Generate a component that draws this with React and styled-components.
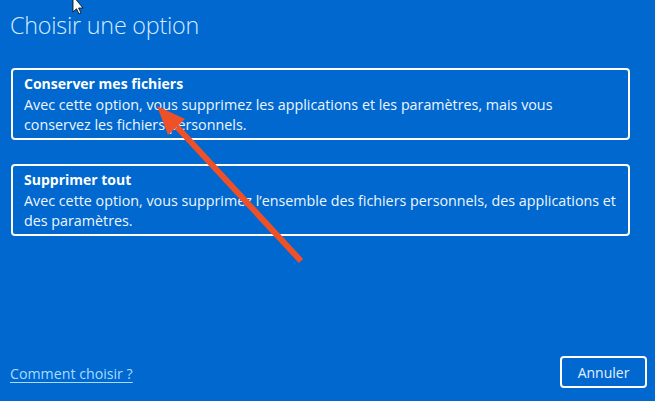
import React from "react";
import styled, { createGlobalStyle } from "styled-components";

const Global = createGlobalStyle`
  html, body {
    margin: 0;
    padding: 0;
    background: #0068cf;
  }
  * { box-sizing: border-box; }
`;

const Screen = styled.div`
  position: relative;
  width: 655px;
  height: 401px;
  overflow: hidden;
  background: #0068cf;
  font-family: "Open Sans", "Noto Sans", sans-serif;
  color: #ffffff;
  display: flex;
  flex-direction: column;
  padding: 0 8px 0 10px;
`;

const Title = styled.h1`
  margin: 0;
  padding-top: 8px;
  height: 68px;
  font-size: 23.3px;
  font-weight: 300;
  letter-spacing: -0.2px;
  color: #d6ecff;
  line-height: 34px;
`;

const Options = styled.div`
  display: flex;
  flex-direction: column;
  gap: 24px;
  width: 619px;
  margin-left: 1px;
`;

const Option = styled.div`
  border: 2px solid #ffffff;
  border-radius: 4px;
  padding: 3px 9px 3px 11px;
  height: 72px;
`;

const OptionName = styled.div`
  font-size: 14px;
  font-weight: 700;
  line-height: 22px;
  color: #ffffff;
`;

const OptionText = styled.div`
  font-size: 14.3px;
  line-height: 20px;
  color: #eef6ff;
`;

const Footer = styled.div`
  margin-top: auto;
  height: 45px;
  display: flex;
  align-items: flex-start;
  justify-content: space-between;
`;

const HelpLink = styled.a`
  margin-top: 8px;
  font-size: 14.2px;
  color: #a9dbff;
  text-decoration: underline;
  text-underline-offset: 3px;
`;

const CancelButton = styled.button`
  width: 87px;
  height: 32px;
  border: 2px solid #ffffff;
  border-radius: 4px;
  background: transparent;
  color: #e2f1ff;
  font-family: "Open Sans", "Noto Sans", sans-serif;
  font-size: 14px;
`;

const Overlay = styled.svg`
  position: absolute;
  left: 0;
  top: 0;
  pointer-events: none;
`;

const options = [
  {
    name: "Conserver mes fichiers",
    text: "Avec cette option, vous supprimez les applications et les paramètres, mais vous conservez les fichiers personnels.",
  },
  {
    name: "Supprimer tout",
    text: "Avec cette option, vous supprimez l’ensemble des fichiers personnels, des applications et des paramètres.",
  },
];

export default function App() {
  return (
    <>
      <Global />
      <Screen>
        <Title>Choisir une option</Title>
        <Options>
          {options.map((o) => (
            <Option key={o.name}>
              <OptionName>{o.name}</OptionName>
              <OptionText>{o.text}</OptionText>
            </Option>
          ))}
        </Options>
        <Footer>
          <HelpLink>Comment choisir ?</HelpLink>
          <CancelButton>Annuler</CancelButton>
        </Footer>

        {/* mouse pointer at the top edge */}
        <Overlay width="655" height="401" viewBox="0 0 655 401">
          <path
            d="M73 -4 L73 12 L76.5 8.8 L79 14 L81 13 L78.6 8 L83 8 Z"
            fill="#ffffff"
            stroke="#000000"
            strokeWidth="0.8"
            strokeLinejoin="round"
          />
          {/* red annotation arrow */}
          <line x1="301" y1="261" x2="177" y2="127" stroke="#ee5028" strokeWidth="6" />
          <polygon points="157,106 185,119 168,135" fill="#ee5028" />
        </Overlay>
      </Screen>
    </>
  );
}
